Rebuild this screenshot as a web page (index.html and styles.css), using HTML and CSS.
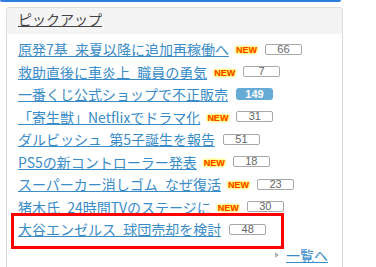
FILE: index.html
```html
<!DOCTYPE html>
<html lang="ja">
<head>
<meta charset="utf-8">
<title>ピックアップ</title>
<link rel="stylesheet" href="styles.css">
</head>
<body>
<div class="topbar"></div>
<section class="panel">
  <h2 class="panel-head"><a href="#">ピックアップ</a></h2>
  <ul class="list">
    <li><a href="#">原発7基 来夏以降に追加再稼働へ</a><span class="new">NEW</span><span class="cnt">66</span></li>
    <li><a href="#">救助直後に車炎上 職員の勇気</a><span class="new">NEW</span><span class="cnt">7</span></li>
    <li><a href="#">一番くじ公式ショップで不正販売</a><span class="cnt hot">149</span></li>
    <li><a href="#">「寄生獣」Netflixでドラマ化</a><span class="new">NEW</span><span class="cnt">31</span></li>
    <li><a href="#">ダルビッシュ 第5子誕生を報告</a><span class="cnt">51</span></li>
    <li><a href="#">PS5の新コントローラー発表</a><span class="new">NEW</span><span class="cnt">18</span></li>
    <li><a href="#">スーパーカー消しゴム なぜ復活</a><span class="new">NEW</span><span class="cnt">23</span></li>
    <li><a href="#">猪木氏 24時間TVのステージに</a><span class="new">NEW</span><span class="cnt">30</span></li>
    <li class="marked"><a href="#">大谷エンゼルス 球団売却を検討</a><span class="cnt">48</span><span class="highlight"></span></li>
  </ul>
  <div class="more"><a href="#">一覧へ</a></div>
</section>
</body>
</html>
```

FILE: styles.css
```css
body {
  margin: 0;
  background: #fff;
  font-family: "Noto Sans CJK JP", "Noto Sans", sans-serif;
  font-size: 14px;
}

.topbar {
  width: 341px;
  height: 2px;
  background: #2f7ddf;
  border-radius: 0 0 3px 3px;
}

.panel {
  margin: 5px 0 0 6px;
  width: 337px;
  box-sizing: border-box;
  border: 1px solid #dcdcdc;
  border-bottom: none;
  border-radius: 4px 4px 0 0;
  height: 260px;
}

.panel-head {
  margin: 0;
  height: 26px;
  box-sizing: border-box;
  padding-left: 11px;
  background: #f4f4f4;
  font-size: 14px;
  font-weight: normal;
  line-height: 22px;
  border-radius: 4px 4px 0 0;
}

.panel-head a {
  color: #444;
  text-decoration: underline;
}

.list {
  list-style: none;
  margin: 0;
  padding: 4px 0 0 11px;
}

.list li {
  position: relative;
  display: flex;
  align-items: center;
  height: 22.5px;
  line-height: 22.5px;
}

.list a {
  color: #3a8cc7;
  text-decoration: underline;
  white-space: nowrap;
  word-spacing: 4px;
}

.new {
  margin-left: 7px;
  margin-top: 3px;
  font-family: "Liberation Sans", Arial, sans-serif;
  font-size: 9px;
  font-weight: bold;
  line-height: 9px;
  color: #ff3a00;
  text-shadow: 0 0 2px #ffee00, 0 0 2px #ffee00, 0 0 3px #fff200;
}

.cnt {
  margin-left: 8px;
  width: 37px;
  height: 11px;
  box-sizing: border-box;
  border: 1px solid #a8a8a8;
  border-radius: 2px;
  font-family: "Liberation Sans", Arial, sans-serif;
  font-size: 11px;
  line-height: 9px;
  color: #666;
  text-align: center;
}

.cnt.hot {
  height: 12px;
  line-height: 12px;
  border: none;
  border-radius: 3px;
  background: #66abd5;
  color: #fff;
  font-weight: bold;
}

.highlight {
  position: absolute;
  left: -7px;
  top: -5px;
  width: 273px;
  height: 36px;
  box-sizing: border-box;
  border: 3px solid #ff0000;
}

.more {
  margin-top: 3px;
  padding-right: 14px;
  display: flex;
  justify-content: flex-end;
  align-items: center;
  line-height: 22.5px;
}

.more::before {
  content: "";
  width: 0;
  height: 0;
  border-left: 4px solid #b5b5b5;
  border-top: 3px solid transparent;
  border-bottom: 3px solid transparent;
  margin-right: 7px;
}

.more a {
  color: #3a8cc7;
  text-decoration: underline;
}
```
